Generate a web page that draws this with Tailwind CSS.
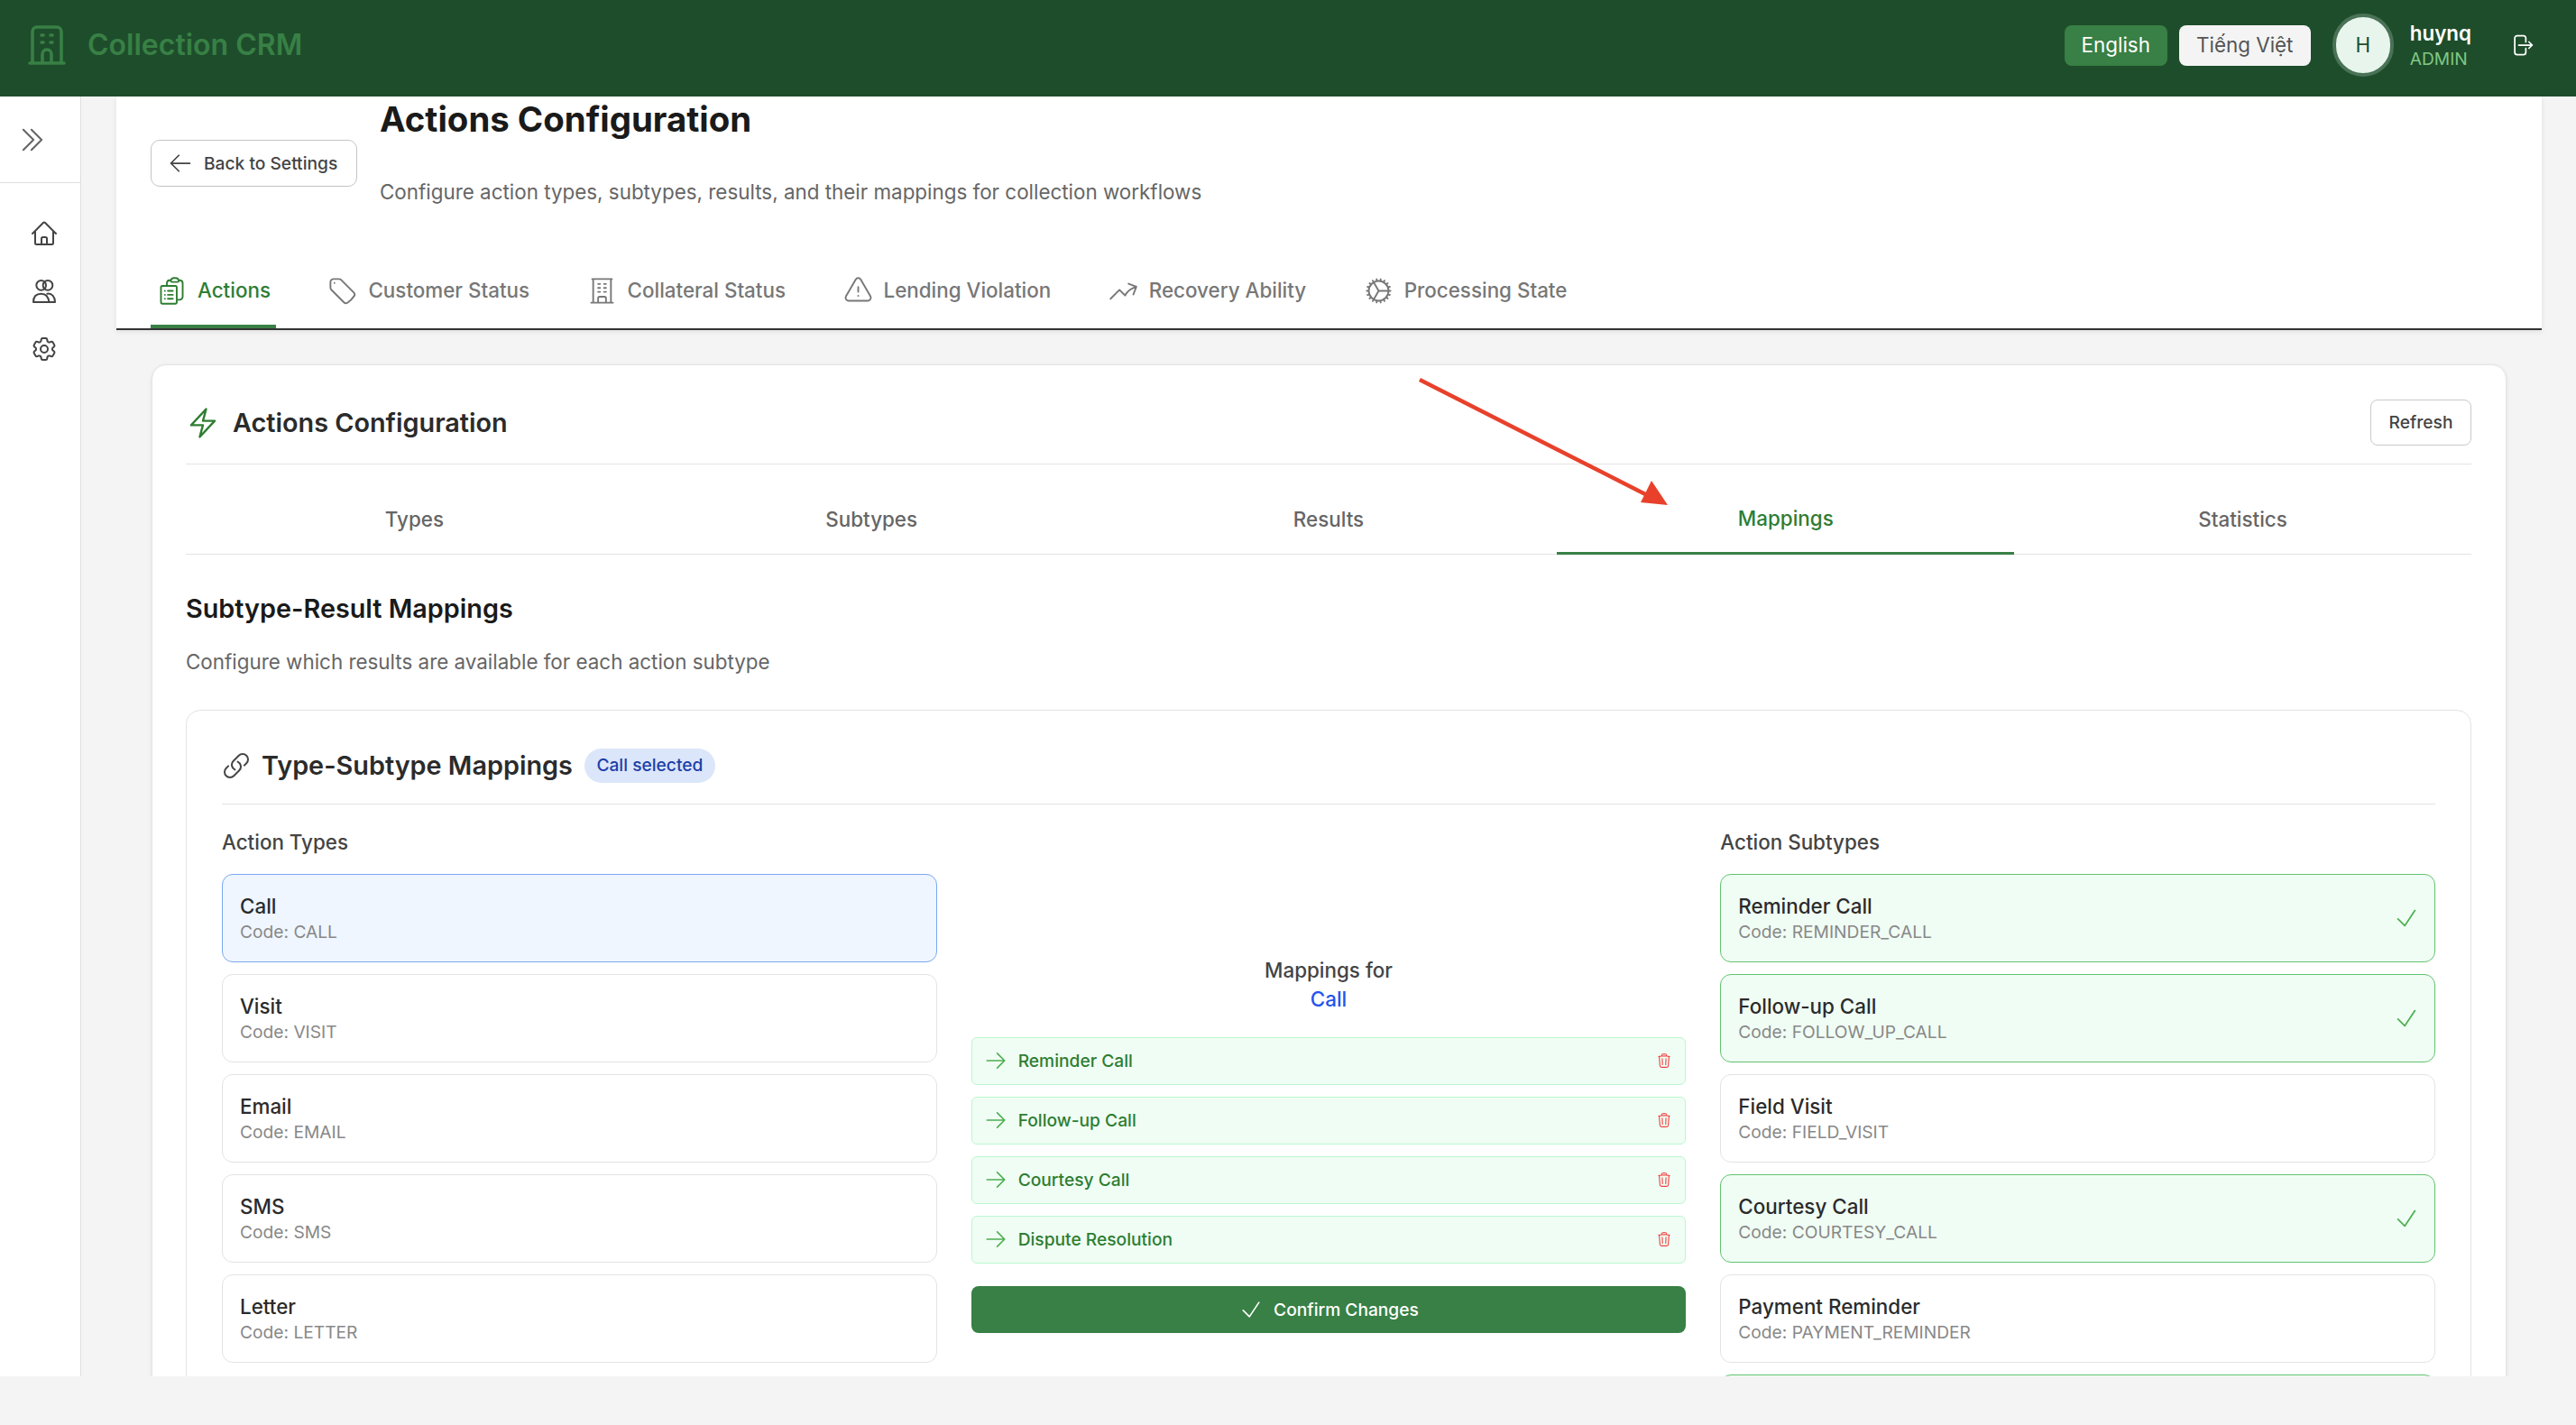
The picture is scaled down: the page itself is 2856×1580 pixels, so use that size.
<!DOCTYPE html>
<html lang="en">
<head>
    <meta charset="UTF-8">
    <meta name="viewport" content="width=device-width, initial-scale=1.0">
    <title>Collection CRM</title>
    <script src="https://cdn.jsdelivr.net/npm/@tailwindcss/browser@4"></script>
</head>
<body class="h-[1580px] overflow-hidden bg-[#f4f4f4] font-['Inter',sans-serif] relative">
    <div class="h-[1526px] flex flex-col overflow-hidden">
        <!-- top bar -->
        <header class="h-[107px] shrink-0 bg-[#1e4d2b] flex items-center pl-[28px] pr-[46px] pb-[7px]">
            <svg class="w-[48px] h-[50px] text-[#388045]" fill="none" viewBox="0 0 24 24" stroke="currentColor" stroke-width="1.8"><path stroke-linecap="round" stroke-linejoin="round" d="M2.500 22h19M4 22V4.500A2.500 2.500 0 0 1 6.500 2h11A2.500 2.500 0 0 1 20 4.500V22M9 6.500h1m4 0h1M9 10.500h1m4 0h1M9.500 22v-5a2.500 2.500 0 0 1 5 0v5"/></svg>
            <span class="ml-[21px] text-[32px] font-semibold text-[#388045]">Collection CRM</span>
            <div class="ml-auto flex items-center">
                <button class="w-[114px] h-[45px] rounded-[8px] bg-[#388045] text-white text-[22.4px]">English</button>
                <button class="ml-[13px] w-[146px] h-[45px] rounded-[8px] bg-[#f4f4f4] text-[#555] text-[22.4px]">Tiếng Việt</button>
                <div class="ml-[24px] w-[68px] h-[70px] rounded-full bg-[#e8f5ec] border-[4px] border-[#4a7256] flex items-center justify-center text-[22.4px] text-[#1e4d2b]">H</div>
                <div class="ml-[18px] flex flex-col">
                    <span class="text-[22.4px] leading-[30px] font-semibold text-white">huynq</span>
                    <span class="text-[19.2px] leading-[26px] text-[#81c784]">ADMIN</span>
                </div>
                <svg class="ml-[42px] w-[28px] h-[28px] text-white" fill="none" viewBox="0 0 24 24" stroke="currentColor" stroke-width="1.5"><path stroke-linecap="round" stroke-linejoin="round" d="M15.750 9V5.250A2.250 2.250 0 0 0 13.500 3h-6a2.250 2.250 0 0 0-2.250 2.250v13.500A2.250 2.250 0 0 0 7.500 21h6a2.250 2.250 0 0 0 2.250-2.250V15m3 0 3-3m0 0-3-3m3 3H9"/></svg>
            </div>
        </header>

        <div class="flex-1 flex min-h-0">
            <!-- sidebar -->
            <aside class="w-[90px] shrink-0 bg-white border-r border-[#dedede] flex flex-col">
                <div class="h-[96px] border-b border-[#dedede] flex items-center pl-[18px]">
                    <svg class="w-[36px] h-[36px] text-[#666]" fill="none" viewBox="0 0 24 24" stroke="currentColor" stroke-width="1.4"><path stroke-linecap="round" stroke-linejoin="round" d="m5.250 4.500 7.500 7.500-7.500 7.500m6-15 7.500 7.500-7.500 7.500"/></svg>
                </div>
                <div class="pt-[40px] pl-[9px] flex flex-col items-center gap-[32px]">
                    <svg class="w-[32px] h-[32px] text-[#444]" fill="none" viewBox="0 0 24 24" stroke="currentColor" stroke-width="1.5"><path stroke-linecap="round" stroke-linejoin="round" d="m2.250 12 8.954-8.955c.44-.439 1.152-.439 1.591 0L21.750 12M4.500 9.750v10.125c0 .621.504 1.125 1.125 1.125H9.750v-4.875c0-.621.504-1.125 1.125-1.125h2.250c.621 0 1.125.504 1.125 1.125V21h4.125c.621 0 1.125-.504 1.125-1.125V9.750M8.250 21h8.250"/></svg>
                    <svg class="w-[32px] h-[32px] text-[#444]" fill="none" viewBox="0 0 24 24" stroke="currentColor" stroke-width="1.5"><circle cx="9.500" cy="7" r="4"/><circle cx="15" cy="7" r="4"/><path stroke-linecap="round" stroke-linejoin="round" d="M3 21c0-4.500 2.500-7 6.500-7s6 2.500 6.500 7M14.500 14c4-.5 6.500 2.500 6.500 7M3 21h18"/></svg>
                    <svg class="w-[32px] h-[32px] text-[#444]" fill="none" viewBox="0 0 24 24" stroke="currentColor" stroke-width="1.5"><path stroke-linecap="round" stroke-linejoin="round" d="M9.594 3.940c.09-.542.56-.94 1.110-.94h2.593c.55 0 1.020.398 1.110.94l.213 1.281c.063.374.313.686.645.870.074.04.147.083.22.127.325.196.72.257 1.075.124l1.217-.456a1.125 1.125 0 0 1 1.370.49l1.296 2.247a1.125 1.125 0 0 1-.26 1.431l-1.003.827c-.293.241-.438.613-.43.992a7.723 7.723 0 0 1 0 .255c-.008.378.137.75.43.991l1.004.827c.424.35.534.955.26 1.430l-1.298 2.247a1.125 1.125 0 0 1-1.369.491l-1.217-.456c-.355-.133-.75-.072-1.076.124a6.470 6.470 0 0 1-.22.128c-.331.183-.581.495-.644.869l-.213 1.281c-.09.543-.56.94-1.110.94h-2.594c-.55 0-1.019-.398-1.110-.94l-.213-1.281c-.062-.374-.312-.686-.644-.87a6.520 6.520 0 0 1-.22-.127c-.325-.196-.72-.257-1.076-.124l-1.217.456a1.125 1.125 0 0 1-1.369-.49l-1.297-2.247a1.125 1.125 0 0 1 .26-1.431l1.004-.827c.292-.24.437-.613.43-.991a6.932 6.932 0 0 1 0-.255c.007-.38-.138-.751-.43-.992l-1.004-.827a1.125 1.125 0 0 1-.26-1.430l1.297-2.247a1.125 1.125 0 0 1 1.370-.491l1.216.456c.356.133.751.072 1.076-.124.072-.044.146-.086.22-.128.332-.183.582-.495.644-.869l.214-1.280Z"/><path stroke-linecap="round" stroke-linejoin="round" d="M15 12a3 3 0 1 1-6 0 3 3 0 0 1 6 0Z"/></svg>
                </div>
            </aside>

            <main class="flex-1 min-w-0 pl-[39px] pr-[38px]">
                <!-- page head -->
                <section class="h-[259px] bg-white border-b-2 border-[#333] shadow-[0_2px_6px_rgba(0,0,0,0.08)] flex flex-col">
                    <div class="h-[169px] shrink-0 flex items-start pl-[38px]">
                        <button class="mt-[48px] w-[229px] h-[52px] rounded-[10px] border border-[#c4c4c4] flex items-center pl-[18px] text-[19.2px] font-medium text-[#444]">
                            <svg class="w-[28px] h-[28px] mr-[12px]" fill="none" viewBox="0 0 24 24" stroke="currentColor" stroke-width="1.5"><path stroke-linecap="round" stroke-linejoin="round" d="M10.500 19.500 3 12m0 0 7.500-7.500M3 12h18"/></svg>
                            Back to Settings
                        </button>
                        <div class="ml-[25px]">
                            <h1 class="mt-[1px] text-[38.4px] leading-[48px] font-bold text-[#1a1a1a]">Actions Configuration</h1>
                            <p class="mt-[41px] text-[22.4px] leading-[32px] text-[#666]">Configure action types, subtypes, results, and their mappings for collection workflows</p>
                        </div>
                    </div>
                    <nav class="h-[90px] pl-[38px] flex gap-[50.5px] text-[22.4px] font-medium text-[#777]">
                        <a class="px-[6px] pt-[8px] flex items-center gap-[11px] border-b-[4px] border-[#388045] text-[#2e7d32]">
                            <svg class="w-[35px] h-[35px]" fill="none" viewBox="0 0 24 24" stroke="currentColor" stroke-width="1.3"><path stroke-linecap="round" stroke-linejoin="round" d="M9 12h3.750M9 15h3.750M9 18h3.750m3 .75H18a2.250 2.250 0 0 0 2.250-2.250V6.108c0-1.124-.836-2.077-1.976-2.192a48.424 48.424 0 0 0-1.123-.08m-5.801 0c-.065.21-.1.433-.1.664 0 .414.336.75.75.75h4.500a.75.75 0 0 0 .75-.75 2.250 2.250 0 0 0-.1-.664m-5.800 0A2.251 2.251 0 0 1 13.500 2.250H15c1.012 0 1.867.668 2.150 1.586m-5.800 0c-.376.023-.75.05-1.124.08C9.095 4.010 8.250 4.973 8.250 6.108V8.250m0 0H4.875c-.621 0-1.125.504-1.125 1.125v11.250c0 .621.504 1.125 1.125 1.125h9.750c.621 0 1.125-.504 1.125-1.125V9.375c0-.621-.504-1.125-1.125-1.125H8.250ZM6.750 12h.008v.008H6.750V12Zm0 3h.008v.008H6.750V15Zm0 3h.008v.008H6.750V18Z"/></svg>
                            Actions
                        </a>
                        <a class="px-[6px] pt-[8px] flex items-center gap-[11px] border-b-[4px] border-transparent">
                            <svg class="w-[35px] h-[35px]" fill="none" viewBox="0 0 24 24" stroke="currentColor" stroke-width="1.3"><path stroke-linecap="round" stroke-linejoin="round" d="M9.568 3H5.250A2.250 2.250 0 0 0 3 5.250v4.318c0 .597.237 1.170.659 1.591l9.581 9.581c.699.699 1.780.872 2.607.33a18.095 18.095 0 0 0 5.223-5.223c.542-.827.369-1.908-.33-2.607L11.160 3.660A2.250 2.250 0 0 0 9.568 3Z"/><path stroke-linecap="round" stroke-linejoin="round" d="M6 6h.008v.008H6V6Z"/></svg>
                            Customer Status
                        </a>
                        <a class="px-[6px] pt-[8px] flex items-center gap-[11px] border-b-[4px] border-transparent">
                            <svg class="w-[35px] h-[35px]" fill="none" viewBox="0 0 24 24" stroke="currentColor" stroke-width="1.3"><path stroke-linecap="round" stroke-linejoin="round" d="M3.750 21h16.500M4.500 3h15M5.250 3v18m13.500-18v18M9 6.750h1.500m-1.500 3h1.500m-1.500 3h1.500m3-6H15m-1.500 3H15m-1.500 3H15M9 21v-3.375c0-.621.504-1.125 1.125-1.125h3.750c.621 0 1.125.504 1.125 1.125V21"/></svg>
                            Collateral Status
                        </a>
                        <a class="px-[6px] pt-[8px] flex items-center gap-[11px] border-b-[4px] border-transparent">
                            <svg class="w-[35px] h-[35px]" fill="none" viewBox="0 0 24 24" stroke="currentColor" stroke-width="1.3"><path stroke-linecap="round" stroke-linejoin="round" d="M12 9v3.750m-9.303 3.376c-.866 1.500.217 3.374 1.948 3.374h14.710c1.730 0 2.813-1.874 1.948-3.374L13.949 3.378c-.866-1.500-3.032-1.500-3.898 0L2.697 16.126ZM12 15.750h.007v.008H12v-.008Z"/></svg>
                            Lending Violation
                        </a>
                        <a class="px-[6px] pt-[8px] flex items-center gap-[11px] border-b-[4px] border-transparent">
                            <svg class="w-[35px] h-[35px]" fill="none" viewBox="0 0 24 24" stroke="currentColor" stroke-width="1.3"><path stroke-linecap="round" stroke-linejoin="round" d="M2.250 18 9 11.250l4.306 4.306a11.950 11.950 0 0 1 5.814-5.518l2.740-1.220m0 0-5.940-2.281m5.940 2.280-2.280 5.941"/></svg>
                            Recovery Ability
                        </a>
                        <a class="px-[6px] pt-[8px] flex items-center gap-[11px] border-b-[4px] border-transparent">
                            <svg class="w-[35px] h-[35px]" fill="none" viewBox="0 0 24 24" stroke="currentColor" stroke-width="1.3"><path stroke-linecap="round" stroke-linejoin="round" d="M4.500 12a7.500 7.500 0 0 0 15 0m-15 0a7.500 7.500 0 1 1 15 0m-15 0H3m16.500 0H21m-1.500 0H12m-8.457 3.077 1.410-.513m14.095-5.130 1.410-.513M5.106 17.785l1.150-.964m11.490-9.642 1.149-.964M7.501 19.795l.75-1.300m7.500-12.990.75-1.300m-6.063 16.658.26-1.477m2.605-14.772.26-1.477m0 17.726-.26-1.477M10.698 4.614l-.26-1.477M16.500 19.794l-.75-1.299M7.500 4.205 12 12m6.894 5.785-1.149-.964M6.256 7.178l-1.150-.964m15.352 8.864-1.410-.513M4.954 9.435l-1.410-.514M12.002 12l-3.750 6.495"/></svg>
                            Processing State
                        </a>
                    </nav>
                </section>

                <!-- main card -->
                <section class="mt-[38px] mx-[39px] bg-white rounded-t-[16px] border border-[#e4e4e4] shadow-[0_1px_4px_rgba(0,0,0,0.08)] pl-[37px] pr-[38px]">
                    <div class="h-[110px] pt-[18px] flex items-center border-b border-[#e3e3e3]">
                        <svg class="w-[38px] h-[38px] text-[#2e7d32]" fill="none" viewBox="0 0 24 24" stroke="currentColor" stroke-width="1.5"><path stroke-linecap="round" stroke-linejoin="round" d="m3.750 13.500 10.500-11.250L12 10.500h8.250L9.750 21.750 12 13.500H3.750Z"/></svg>
                        <h2 class="ml-[14px] text-[28.8px] font-semibold text-[#2b2b2b]">Actions Configuration</h2>
                        <button class="ml-auto w-[112px] h-[51px] rounded-[8px] border border-[#c9c9c9] text-[19.2px] font-medium text-[#444]">Refresh</button>
                    </div>
                    <div class="mt-[22px] h-[78px] grid grid-cols-5 border-b border-[#e3e3e3] text-[22.4px] font-medium text-[#666]">
                        <div class="flex items-center justify-center">Types</div>
                        <div class="flex items-center justify-center">Subtypes</div>
                        <div class="flex items-center justify-center">Results</div>
                        <div class="flex items-center justify-center text-[#2e7d32] border-b-[3px] border-[#388045] -mb-px">Mappings</div>
                        <div class="flex items-center justify-center">Statistics</div>
                    </div>
                    <h3 class="mt-[40px] text-[28.8px] leading-[40px] font-semibold text-[#1a1a1a]">Subtype-Result Mappings</h3>
                    <p class="mt-[23px] text-[22.4px] leading-[32px] text-[#666]">Configure which results are available for each action subtype</p>

                    <!-- mappings card -->
                    <div class="mt-[37px] rounded-t-[16px] border border-[#e3e3e3] px-[39px]">
                        <div class="pt-[40px] pb-[22px] h-[104px] flex items-center border-b border-[#e3e3e3]">
                            <svg class="w-[32px] h-[32px] text-[#444]" fill="none" viewBox="0 0 24 24" stroke="currentColor" stroke-width="1.5"><path stroke-linecap="round" stroke-linejoin="round" d="M13.190 8.688a4.500 4.500 0 0 1 1.242 7.244l-4.500 4.500a4.500 4.500 0 0 1-6.364-6.364l1.757-1.757m13.350-.622 1.757-1.757a4.500 4.500 0 0 0-6.364-6.364l-4.500 4.500a4.500 4.500 0 0 0 1.242 7.244"/></svg>
                            <h4 class="ml-[12px] text-[28.8px] font-semibold text-[#2b2b2b]">Type-Subtype Mappings</h4>
                            <span class="ml-[13px] w-[145px] h-[38px] rounded-full bg-[#dbe6fa] text-[19.2px] font-medium text-[#1e3ea8] flex items-center justify-center">Call selected</span>
                        </div>
                        <div class="mt-[22px] grid grid-cols-3 gap-x-[38px]">
                            <!-- types -->
                            <div>
                                <div class="mt-[3px] h-[34px] text-[22.4px] leading-[34px] font-medium text-[#444]">Action Types</div>
                                <div class="mt-[18px] flex flex-col gap-[13px]">
                                    <div class="h-[98px] rounded-[12px] border border-[#7aa7f0] bg-[#eff6ff] pl-[19px] flex flex-col justify-center">
                                        <div class="pt-[1px] text-[22.4px] leading-[30px] font-medium text-[#2b2b2b]">Call</div>
                                        <div class="text-[19.2px] leading-[27px] text-[#888]">Code: CALL</div>
                                    </div>
                                    <div class="h-[98px] rounded-[12px] border border-[#e3e3e3] pl-[19px] flex flex-col justify-center">
                                        <div class="pt-[1px] text-[22.4px] leading-[30px] font-medium text-[#2b2b2b]">Visit</div>
                                        <div class="text-[19.2px] leading-[27px] text-[#888]">Code: VISIT</div>
                                    </div>
                                    <div class="h-[98px] rounded-[12px] border border-[#e3e3e3] pl-[19px] flex flex-col justify-center">
                                        <div class="pt-[1px] text-[22.4px] leading-[30px] font-medium text-[#2b2b2b]">Email</div>
                                        <div class="text-[19.2px] leading-[27px] text-[#888]">Code: EMAIL</div>
                                    </div>
                                    <div class="h-[98px] rounded-[12px] border border-[#e3e3e3] pl-[19px] flex flex-col justify-center">
                                        <div class="pt-[1px] text-[22.4px] leading-[30px] font-medium text-[#2b2b2b]">SMS</div>
                                        <div class="text-[19.2px] leading-[27px] text-[#888]">Code: SMS</div>
                                    </div>
                                    <div class="h-[98px] rounded-[12px] border border-[#e3e3e3] pl-[19px] flex flex-col justify-center">
                                        <div class="pt-[1px] text-[22.4px] leading-[30px] font-medium text-[#2b2b2b]">Letter</div>
                                        <div class="text-[19.2px] leading-[27px] text-[#888]">Code: LETTER</div>
                                    </div>
                                </div>
                            </div>

                            <!-- current mappings -->
                            <div class="pt-[146px]">
                                <div class="text-center text-[22.4px] leading-[31px] font-medium text-[#444]">Mappings for</div>
                                <div class="mt-[1px] text-center text-[22.4px] leading-[31px] font-medium text-[#2255ee]">Call</div>
                                <div class="mt-[27px] flex flex-col gap-[13px]">
                                    <div class="h-[53px] rounded-[6px] border border-[#bbf7d0] bg-[#f0fdf4] pl-[13px] pr-[14px] pb-[1px] flex items-center text-[19.2px] font-medium text-[#2e7d32]">
                                        <svg class="w-[26px] h-[26px] mr-[12px] text-[#4caf50]" fill="none" viewBox="0 0 24 24" stroke="currentColor" stroke-width="1.5"><path stroke-linecap="round" stroke-linejoin="round" d="M13.500 4.500 21 12m0 0-7.500 7.500M21 12H3"/></svg>
                                        Reminder Call
                                        <svg class="ml-auto w-[18px] h-[20px] text-[#ef4444]" fill="none" viewBox="0 0 24 24" stroke="currentColor" stroke-width="1.5"><path stroke-linecap="round" stroke-linejoin="round" d="m14.740 9-.346 9m-4.788 0L9.260 9m9.968-3.210c.342.052.682.107 1.022.166m-1.022-.165L18.160 19.673a2.250 2.250 0 0 1-2.244 2.077H8.084a2.250 2.250 0 0 1-2.244-2.077L4.772 5.790m14.456 0a48.108 48.108 0 0 0-3.478-.397m-12 .562c.34-.059.68-.114 1.022-.165m0 0a48.110 48.110 0 0 1 3.478-.397m7.500 0v-.916c0-1.180-.91-2.164-2.090-2.201a51.964 51.964 0 0 0-3.320 0c-1.180.037-2.090 1.022-2.090 2.201v.916m7.500 0a48.667 48.667 0 0 0-7.500 0"/></svg>
                                    </div>
                                    <div class="h-[53px] rounded-[6px] border border-[#bbf7d0] bg-[#f0fdf4] pl-[13px] pr-[14px] pb-[1px] flex items-center text-[19.2px] font-medium text-[#2e7d32]">
                                        <svg class="w-[26px] h-[26px] mr-[12px] text-[#4caf50]" fill="none" viewBox="0 0 24 24" stroke="currentColor" stroke-width="1.5"><path stroke-linecap="round" stroke-linejoin="round" d="M13.500 4.500 21 12m0 0-7.500 7.500M21 12H3"/></svg>
                                        Follow-up Call
                                        <svg class="ml-auto w-[18px] h-[20px] text-[#ef4444]" fill="none" viewBox="0 0 24 24" stroke="currentColor" stroke-width="1.5"><path stroke-linecap="round" stroke-linejoin="round" d="m14.740 9-.346 9m-4.788 0L9.260 9m9.968-3.210c.342.052.682.107 1.022.166m-1.022-.165L18.160 19.673a2.250 2.250 0 0 1-2.244 2.077H8.084a2.250 2.250 0 0 1-2.244-2.077L4.772 5.790m14.456 0a48.108 48.108 0 0 0-3.478-.397m-12 .562c.34-.059.68-.114 1.022-.165m0 0a48.110 48.110 0 0 1 3.478-.397m7.500 0v-.916c0-1.180-.91-2.164-2.090-2.201a51.964 51.964 0 0 0-3.320 0c-1.180.037-2.090 1.022-2.090 2.201v.916m7.500 0a48.667 48.667 0 0 0-7.500 0"/></svg>
                                    </div>
                                    <div class="h-[53px] rounded-[6px] border border-[#bbf7d0] bg-[#f0fdf4] pl-[13px] pr-[14px] pb-[1px] flex items-center text-[19.2px] font-medium text-[#2e7d32]">
                                        <svg class="w-[26px] h-[26px] mr-[12px] text-[#4caf50]" fill="none" viewBox="0 0 24 24" stroke="currentColor" stroke-width="1.5"><path stroke-linecap="round" stroke-linejoin="round" d="M13.500 4.500 21 12m0 0-7.500 7.500M21 12H3"/></svg>
                                        Courtesy Call
                                        <svg class="ml-auto w-[18px] h-[20px] text-[#ef4444]" fill="none" viewBox="0 0 24 24" stroke="currentColor" stroke-width="1.5"><path stroke-linecap="round" stroke-linejoin="round" d="m14.740 9-.346 9m-4.788 0L9.260 9m9.968-3.210c.342.052.682.107 1.022.166m-1.022-.165L18.160 19.673a2.250 2.250 0 0 1-2.244 2.077H8.084a2.250 2.250 0 0 1-2.244-2.077L4.772 5.790m14.456 0a48.108 48.108 0 0 0-3.478-.397m-12 .562c.34-.059.68-.114 1.022-.165m0 0a48.110 48.110 0 0 1 3.478-.397m7.500 0v-.916c0-1.180-.91-2.164-2.090-2.201a51.964 51.964 0 0 0-3.320 0c-1.180.037-2.090 1.022-2.090 2.201v.916m7.500 0a48.667 48.667 0 0 0-7.500 0"/></svg>
                                    </div>
                                    <div class="h-[53px] rounded-[6px] border border-[#bbf7d0] bg-[#f0fdf4] pl-[13px] pr-[14px] pb-[1px] flex items-center text-[19.2px] font-medium text-[#2e7d32]">
                                        <svg class="w-[26px] h-[26px] mr-[12px] text-[#4caf50]" fill="none" viewBox="0 0 24 24" stroke="currentColor" stroke-width="1.5"><path stroke-linecap="round" stroke-linejoin="round" d="M13.500 4.500 21 12m0 0-7.500 7.500M21 12H3"/></svg>
                                        Dispute Resolution
                                        <svg class="ml-auto w-[18px] h-[20px] text-[#ef4444]" fill="none" viewBox="0 0 24 24" stroke="currentColor" stroke-width="1.5"><path stroke-linecap="round" stroke-linejoin="round" d="m14.740 9-.346 9m-4.788 0L9.260 9m9.968-3.210c.342.052.682.107 1.022.166m-1.022-.165L18.160 19.673a2.250 2.250 0 0 1-2.244 2.077H8.084a2.250 2.250 0 0 1-2.244-2.077L4.772 5.790m14.456 0a48.108 48.108 0 0 0-3.478-.397m-12 .562c.34-.059.68-.114 1.022-.165m0 0a48.110 48.110 0 0 1 3.478-.397m7.500 0v-.916c0-1.180-.91-2.164-2.090-2.201a51.964 51.964 0 0 0-3.320 0c-1.180.037-2.090 1.022-2.090 2.201v.916m7.500 0a48.667 48.667 0 0 0-7.500 0"/></svg>
                                    </div>
                                </div>
                                <button class="mt-[25px] w-full h-[52px] rounded-[8px] bg-[#388045] text-white text-[19.2px] font-medium flex items-center justify-center">
                                    <svg class="w-[28px] h-[28px] mr-[11px]" fill="none" viewBox="0 0 24 24" stroke="currentColor" stroke-width="1.4"><path stroke-linecap="round" stroke-linejoin="round" d="m4.500 12.750 6 6 9-13.500"/></svg>
                                    Confirm Changes
                                </button>
                            </div>

                            <!-- subtypes -->
                            <div>
                                <div class="mt-[3px] h-[34px] text-[22.4px] leading-[34px] font-medium text-[#444]">Action Subtypes</div>
                                <div class="mt-[18px] flex flex-col gap-[13px]">
                                    <div class="h-[98px] rounded-[12px] border border-[#62c370] bg-[#f0fdf4] pl-[19px] pr-[16px] flex items-center justify-between">
                                        <div>
                                            <div class="pt-[1px] text-[22.4px] leading-[30px] font-medium text-[#2b2b2b]">Reminder Call</div>
                                            <div class="text-[19.2px] leading-[27px] text-[#888]">Code: REMINDER_CALL</div>
                                        </div>
                                        <svg class="w-[30px] h-[30px] text-[#4caf50]" fill="none" viewBox="0 0 24 24" stroke="currentColor" stroke-width="1.4"><path stroke-linecap="round" stroke-linejoin="round" d="m4.500 12.750 6 6 9-13.500"/></svg>
                                    </div>
                                    <div class="h-[98px] rounded-[12px] border border-[#62c370] bg-[#f0fdf4] pl-[19px] pr-[16px] flex items-center justify-between">
                                        <div>
                                            <div class="pt-[1px] text-[22.4px] leading-[30px] font-medium text-[#2b2b2b]">Follow-up Call</div>
                                            <div class="text-[19.2px] leading-[27px] text-[#888]">Code: FOLLOW_UP_CALL</div>
                                        </div>
                                        <svg class="w-[30px] h-[30px] text-[#4caf50]" fill="none" viewBox="0 0 24 24" stroke="currentColor" stroke-width="1.4"><path stroke-linecap="round" stroke-linejoin="round" d="m4.500 12.750 6 6 9-13.500"/></svg>
                                    </div>
                                    <div class="h-[98px] rounded-[12px] border border-[#e3e3e3] pl-[19px] pr-[16px] flex items-center justify-between">
                                        <div>
                                            <div class="pt-[1px] text-[22.4px] leading-[30px] font-medium text-[#2b2b2b]">Field Visit</div>
                                            <div class="text-[19.2px] leading-[27px] text-[#888]">Code: FIELD_VISIT</div>
                                        </div>
                                    </div>
                                    <div class="h-[98px] rounded-[12px] border border-[#62c370] bg-[#f0fdf4] pl-[19px] pr-[16px] flex items-center justify-between">
                                        <div>
                                            <div class="pt-[1px] text-[22.4px] leading-[30px] font-medium text-[#2b2b2b]">Courtesy Call</div>
                                            <div class="text-[19.2px] leading-[27px] text-[#888]">Code: COURTESY_CALL</div>
                                        </div>
                                        <svg class="w-[30px] h-[30px] text-[#4caf50]" fill="none" viewBox="0 0 24 24" stroke="currentColor" stroke-width="1.4"><path stroke-linecap="round" stroke-linejoin="round" d="m4.500 12.750 6 6 9-13.500"/></svg>
                                    </div>
                                    <div class="h-[98px] rounded-[12px] border border-[#e3e3e3] pl-[19px] pr-[16px] flex items-center justify-between">
                                        <div>
                                            <div class="pt-[1px] text-[22.4px] leading-[30px] font-medium text-[#2b2b2b]">Payment Reminder</div>
                                            <div class="text-[19.2px] leading-[27px] text-[#888]">Code: PAYMENT_REMINDER</div>
                                        </div>
                                    </div>
                                    <div class="h-[98px] rounded-[12px] border border-[#62c370] bg-[#f0fdf4]"></div>
                                </div>
                            </div>
                        </div>
                    </div>
                </section>
            </main>
        </div>
    </div>

    <!-- red annotation arrow drawn over the screenshot -->
    <svg class="absolute left-[1570px] top-[415px] w-[290px] h-[150px] pointer-events-none" viewBox="0 0 290 150" fill="none">
        <path d="M4 6 L262 137" stroke="#e8412b" stroke-width="4.500"/>
        <path d="M279 145 L249 142 L261 118 Z" fill="#e8412b"/>
    </svg>
</body>
</html>
